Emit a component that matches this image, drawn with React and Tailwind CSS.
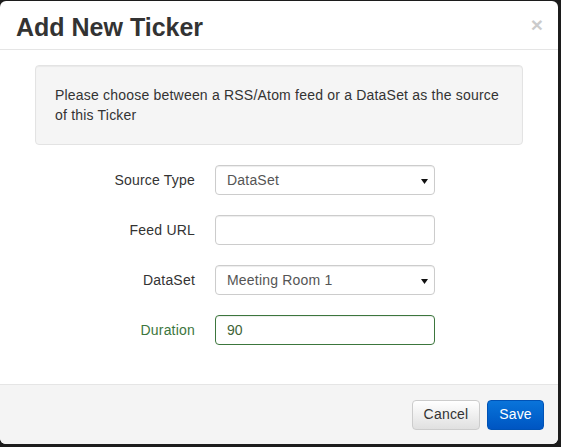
import React from "react";

const font = { fontFamily: '"Liberation Sans", Arial, sans-serif' };

const Caret = () => (
    <svg width="7" height="5" viewBox="0 0 7 5" className="absolute right-[6px] top-[13px]">
        <path d="M0 0 L7 0 L3.5 5 Z" fill="#111" />
    </svg>
);

const Row = ({ label, success, children }) => (
    <div className="flex items-center">
        <label className={`w-[160px] text-right text-[14px] tracking-[0.2px] ${success ? "text-[#3c763d]" : "text-[#333]"}`}>
            {label}
        </label>
        <div className="ml-[20px] w-[220px]">{children}</div>
    </div>
);

const SelectBox = ({ value }) => (
    <div className="relative h-[30px] rounded-[4px] border border-[#ccc] bg-white shadow-[inset_0_1px_1px_rgba(0,0,0,0.075)] pl-[11px] flex items-center text-[14px] tracking-[0.2px] text-[#555]">
        {value}
        <Caret />
    </div>
);

const App = () => {
    return (
        <div className="w-[561px] h-[447px] bg-[#1c1c1c] pt-px" style={font}>
            <div className="w-[558px] h-[443px] bg-white rounded-[6px] flex flex-col overflow-hidden">
                <div className="h-[49px] shrink-0 border-b border-[#e5e5e5] flex items-center justify-between pl-[16px] pr-[15px] pt-[4px]">
                    <h4 className="text-[25px] font-bold text-[#333] leading-none">Add New Ticker</h4>
                    <span className="text-[21px] font-bold text-black opacity-20 leading-none -mt-[6px]">×</span>
                </div>

                <div className="flex-1 px-[35px] pt-[15px]">
                    <div className="h-[80px] rounded-[4px] border border-[#e3e3e3] bg-[#f5f5f5] shadow-[inset_0_1px_1px_rgba(0,0,0,0.05)] pl-[19px] pr-[10px] pt-[19px] text-[14px] leading-[20px] tracking-[0.2px] text-[#333]">
                        Please choose between a RSS/Atom feed or a DataSet as the source of this Ticker
                    </div>

                    <div className="mt-[20px] flex flex-col gap-[20px]">
                        <Row label="Source Type">
                            <SelectBox value="DataSet" />
                        </Row>
                        <Row label="Feed URL">
                            <div className="h-[30px] rounded-[4px] border border-[#ccc] bg-white shadow-[inset_0_1px_1px_rgba(0,0,0,0.075)]" />
                        </Row>
                        <Row label="DataSet">
                            <SelectBox value="Meeting Room 1" />
                        </Row>
                        <Row label="Duration" success>
                            <div className="h-[30px] rounded-[4px] border border-[#3c763d] bg-white shadow-[inset_0_1px_1px_rgba(0,0,0,0.075)] pl-[11px] flex items-center text-[14px] text-[#3f6436]">
                                90
                            </div>
                        </Row>
                    </div>
                </div>

                <div className="h-[60px] shrink-0 border-t border-[#e5e5e5] bg-[#f4f4f4] flex items-center justify-end gap-[7px] pr-[14px]">
                    <button className="h-[30px] w-[68px] rounded-[4px] border border-[#ccc] bg-gradient-to-b from-white to-[#e0e0e0] text-[14px] tracking-[0.2px] text-[#333]">
                        Cancel
                    </button>
                    <button className="h-[30px] w-[57px] rounded-[4px] border border-[#0052b5] bg-gradient-to-b from-[#0a74da] to-[#0055c2] text-[14px] tracking-[0.2px] text-white">
                        Save
                    </button>
                </div>
            </div>
        </div>
    );
};

export default App;
